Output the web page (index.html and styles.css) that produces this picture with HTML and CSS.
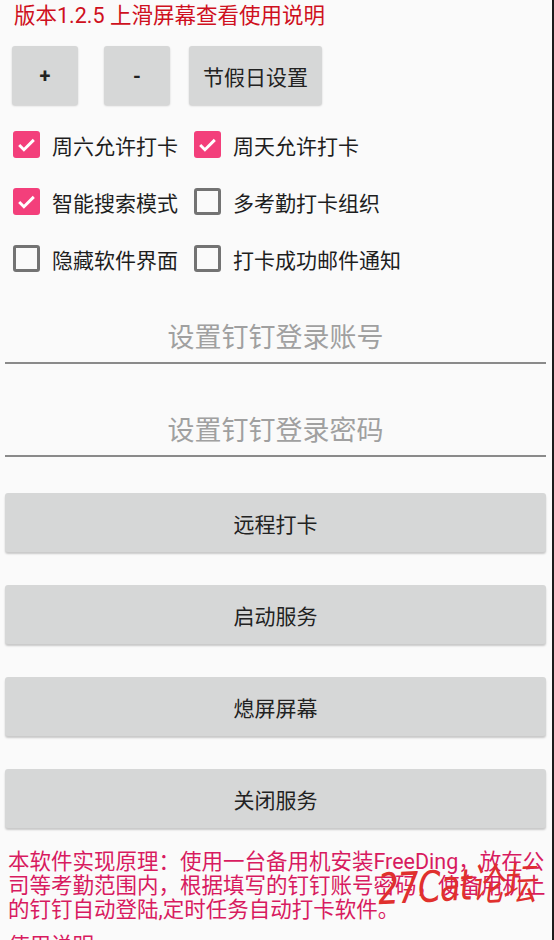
FILE: index.html
```html
<!DOCTYPE html>
<html lang="zh">
<head>
    <meta charset="UTF-8" />
    <meta name="viewport" content="width=device-width, initial-scale=1.0" />
    <title>FreeDing</title>
    <link rel="stylesheet" href="styles.css">
</head>
<body>
    <div class="pantalla">

        <p class="version">版本1.2.5 上滑屏幕查看使用说明</p>

        <div class="herramientas">
            <button type="button" class="btn-chico mas">+</button>
            <button type="button" class="btn-chico menos">-</button>
            <button type="button" class="btn-chico festivos">节假日设置</button>
        </div>

        <div class="opciones">
            <label class="opcion"><span class="caja marcada"><svg viewBox="0 0 24 24"><path d="M5.5 12.5l4.2 4.2 8.8-8.8" /></svg></span>周六允许打卡</label>
            <label class="opcion"><span class="caja marcada"><svg viewBox="0 0 24 24"><path d="M5.5 12.5l4.2 4.2 8.8-8.8" /></svg></span>周天允许打卡</label>
            <label class="opcion"><span class="caja marcada"><svg viewBox="0 0 24 24"><path d="M5.5 12.5l4.2 4.2 8.8-8.8" /></svg></span>智能搜索模式</label>
            <label class="opcion"><span class="caja"></span>多考勤打卡组织</label>
            <label class="opcion"><span class="caja"></span>隐藏软件界面</label>
            <label class="opcion"><span class="caja"></span>打卡成功邮件通知</label>
        </div>

        <input type="text" class="campo campo-cuenta" placeholder="设置钉钉登录账号">
        <input type="password" class="campo campo-clave" placeholder="设置钉钉登录密码">

        <div class="acciones">
            <button type="button" class="btn-grande">远程打卡</button>
            <button type="button" class="btn-grande">启动服务</button>
            <button type="button" class="btn-grande">熄屏屏幕</button>
            <button type="button" class="btn-grande">关闭服务</button>
        </div>

        <p class="principio">本软件实现原理：使用一台备用机安装FreeDing，放在公司等考勤范围内，根据填写的钉钉账号密码，使备用机上的钉钉自动登陆,定时任务自动打卡软件。</p>
        <p class="principio ayuda">使用说明</p>

        <span class="marca">27Cat论坛</span>
    </div>
</body>
</html>
```

FILE: styles.css
```css
body {
    margin: 0;
    padding: 0;
    background-color: #1b1b1b;
    font-family: Roboto, "Noto Sans CJK SC", sans-serif;
}
.pantalla {
    position: relative;
    width: 552px;
    height: 940px;
    overflow: hidden;
    background-color: #fafafa;
}

.version {
    margin: 0;
    padding: 4px 14px 0;
    font-size: 21.5px;
    line-height: 24px;
    color: #cf1020;
}

.herramientas {
    display: flex;
    margin-top: 18px;
    padding-left: 12px;
}
.btn-chico {
    height: 59px;
    padding: 0;
    border: none;
    border-radius: 3px;
    background-color: #d6d7d7;
    box-shadow: 0 1px 2px rgba(0, 0, 0, 0.18);
    font-family: inherit;
    font-size: 21px;
    color: #222;
}
.mas, .menos {
    width: 66px;
    font-size: 20px;
    font-weight: bold;
}
.menos {
    margin-left: 26px;
}
.festivos {
    width: 133px;
    margin-left: 19px;
}

.opciones {
    display: grid;
    grid-template-columns: 181px auto;
    margin-top: 11px;
    padding-left: 13px;
}
.opcion {
    display: flex;
    align-items: center;
    gap: 12px;
    height: 57px;
    font-size: 21px;
    color: #1e1e1e;
}
.caja {
    box-sizing: border-box;
    width: 27px;
    height: 27px;
    border: 3px solid #737373;
    border-radius: 3px;
}
.caja.marcada {
    border: none;
    background-color: #f33f7b;
}
.caja svg {
    display: block;
    width: 27px;
    height: 27px;
    fill: none;
    stroke: #fff;
    stroke-width: 2.6;
}

.campo {
    display: block;
    box-sizing: border-box;
    width: 541px;
    height: 50px;
    margin: 0 0 0 5px;
    padding: 0;
    border: none;
    border-bottom: 2px solid #8a8a8a;
    background: transparent;
    font-family: inherit;
    font-size: 27px;
    text-align: center;
    outline: none;
}
.campo::placeholder {
    color: #a0a0a0;
}
.campo-cuenta {
    margin-top: 27px;
}
.campo-clave {
    margin-top: 43px;
}

.acciones {
    display: flex;
    flex-direction: column;
    gap: 33px;
    margin: 36px 6px 0 5px;
}
.btn-grande {
    height: 59px;
    border: none;
    border-radius: 3px;
    background-color: #d6d7d7;
    box-shadow: 0 2px 2px rgba(0, 0, 0, 0.2);
    font-family: inherit;
    font-size: 21px;
    color: #222;
}

.principio {
    margin: 22px 0 0;
    padding: 0 6px 0 8px;
    font-size: 21.5px;
    line-height: 24px;
    color: #d81b60;
}
.ayuda {
    margin-top: 12px;
}

.marca {
    position: absolute;
    left: 378px;
    top: 870px;
    white-space: nowrap;
    font-family: "DejaVu Sans", sans-serif;
    font-size: 33px;
    line-height: 40px;
    font-style: italic;
    letter-spacing: -1px;
    color: #e0302d;
    transform: rotate(-3deg) scaleY(1.3);
    transform-origin: left center;
}
```
